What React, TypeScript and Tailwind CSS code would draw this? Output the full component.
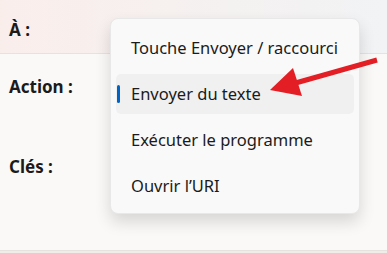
const items = ['Touche Envoyer / raccourci', 'Envoyer du texte', 'Exécuter le programme', 'Ouvrir l’URI'];

export default function App() {
  const selected = 1;
  return (
    <div
      className="relative w-[387px] h-[253px] overflow-hidden bg-[#faf9f7] text-[#1b1b1b]"
      style={{ fontFamily: '"Noto Sans", "Open Sans", sans-serif' }}
    >
      {/* Header band */}
      <div className="h-[54px] border-b border-[#e5e2df] bg-gradient-to-r from-[#faeeeb] to-[#f1f3f5] flex items-center pl-[9px] pt-[6px]">
        <span className="text-[17px] font-bold">À :</span>
      </div>

      <div className="h-[197px] border-b border-[#e6e3df] flex flex-col pl-[9px]">
        <div className="mt-[22px] text-[17px] font-bold leading-[22px]">Action :</div>
        <div className="mt-[58px] text-[17px] font-bold leading-[22px]">Clés :</div>
      </div>
      <div className="h-[2px] bg-[#f0ede9]" />

      {/* Flyout menu */}
      <div className="absolute left-[110px] top-[18px] w-[250px] pt-[9px] pb-[7px] px-[5px] flex flex-col gap-[6px] rounded-[8px] bg-[#f9f9f9] border border-[#e8e8e8] shadow-[0_8px_16px_rgba(0,0,0,0.14)]">
        {items.map((label, i) => (
          <div
            key={label}
            className={`relative h-[40px] rounded-[5px] flex items-center pl-[15px] text-[16.5px] ${i === selected ? 'bg-[#f0f0f0]' : ''}`}
          >
            {i === selected && (
              <span className="absolute left-[1px] top-[11px] w-[3px] h-[18px] rounded-full bg-[#0063c6]" />
            )}
            {label}
          </div>
        ))}
      </div>

      {/* Red arrow annotation */}
      <svg className="absolute left-0 top-0 pointer-events-none" width="387" height="253" viewBox="0 0 387 253">
        <line x1="377" y1="60" x2="292" y2="84" stroke="#e31e24" strokeWidth="5" />
        <polygon points="270,90 293,68 302,96" fill="#e31e24" />
      </svg>
    </div>
  );
}
